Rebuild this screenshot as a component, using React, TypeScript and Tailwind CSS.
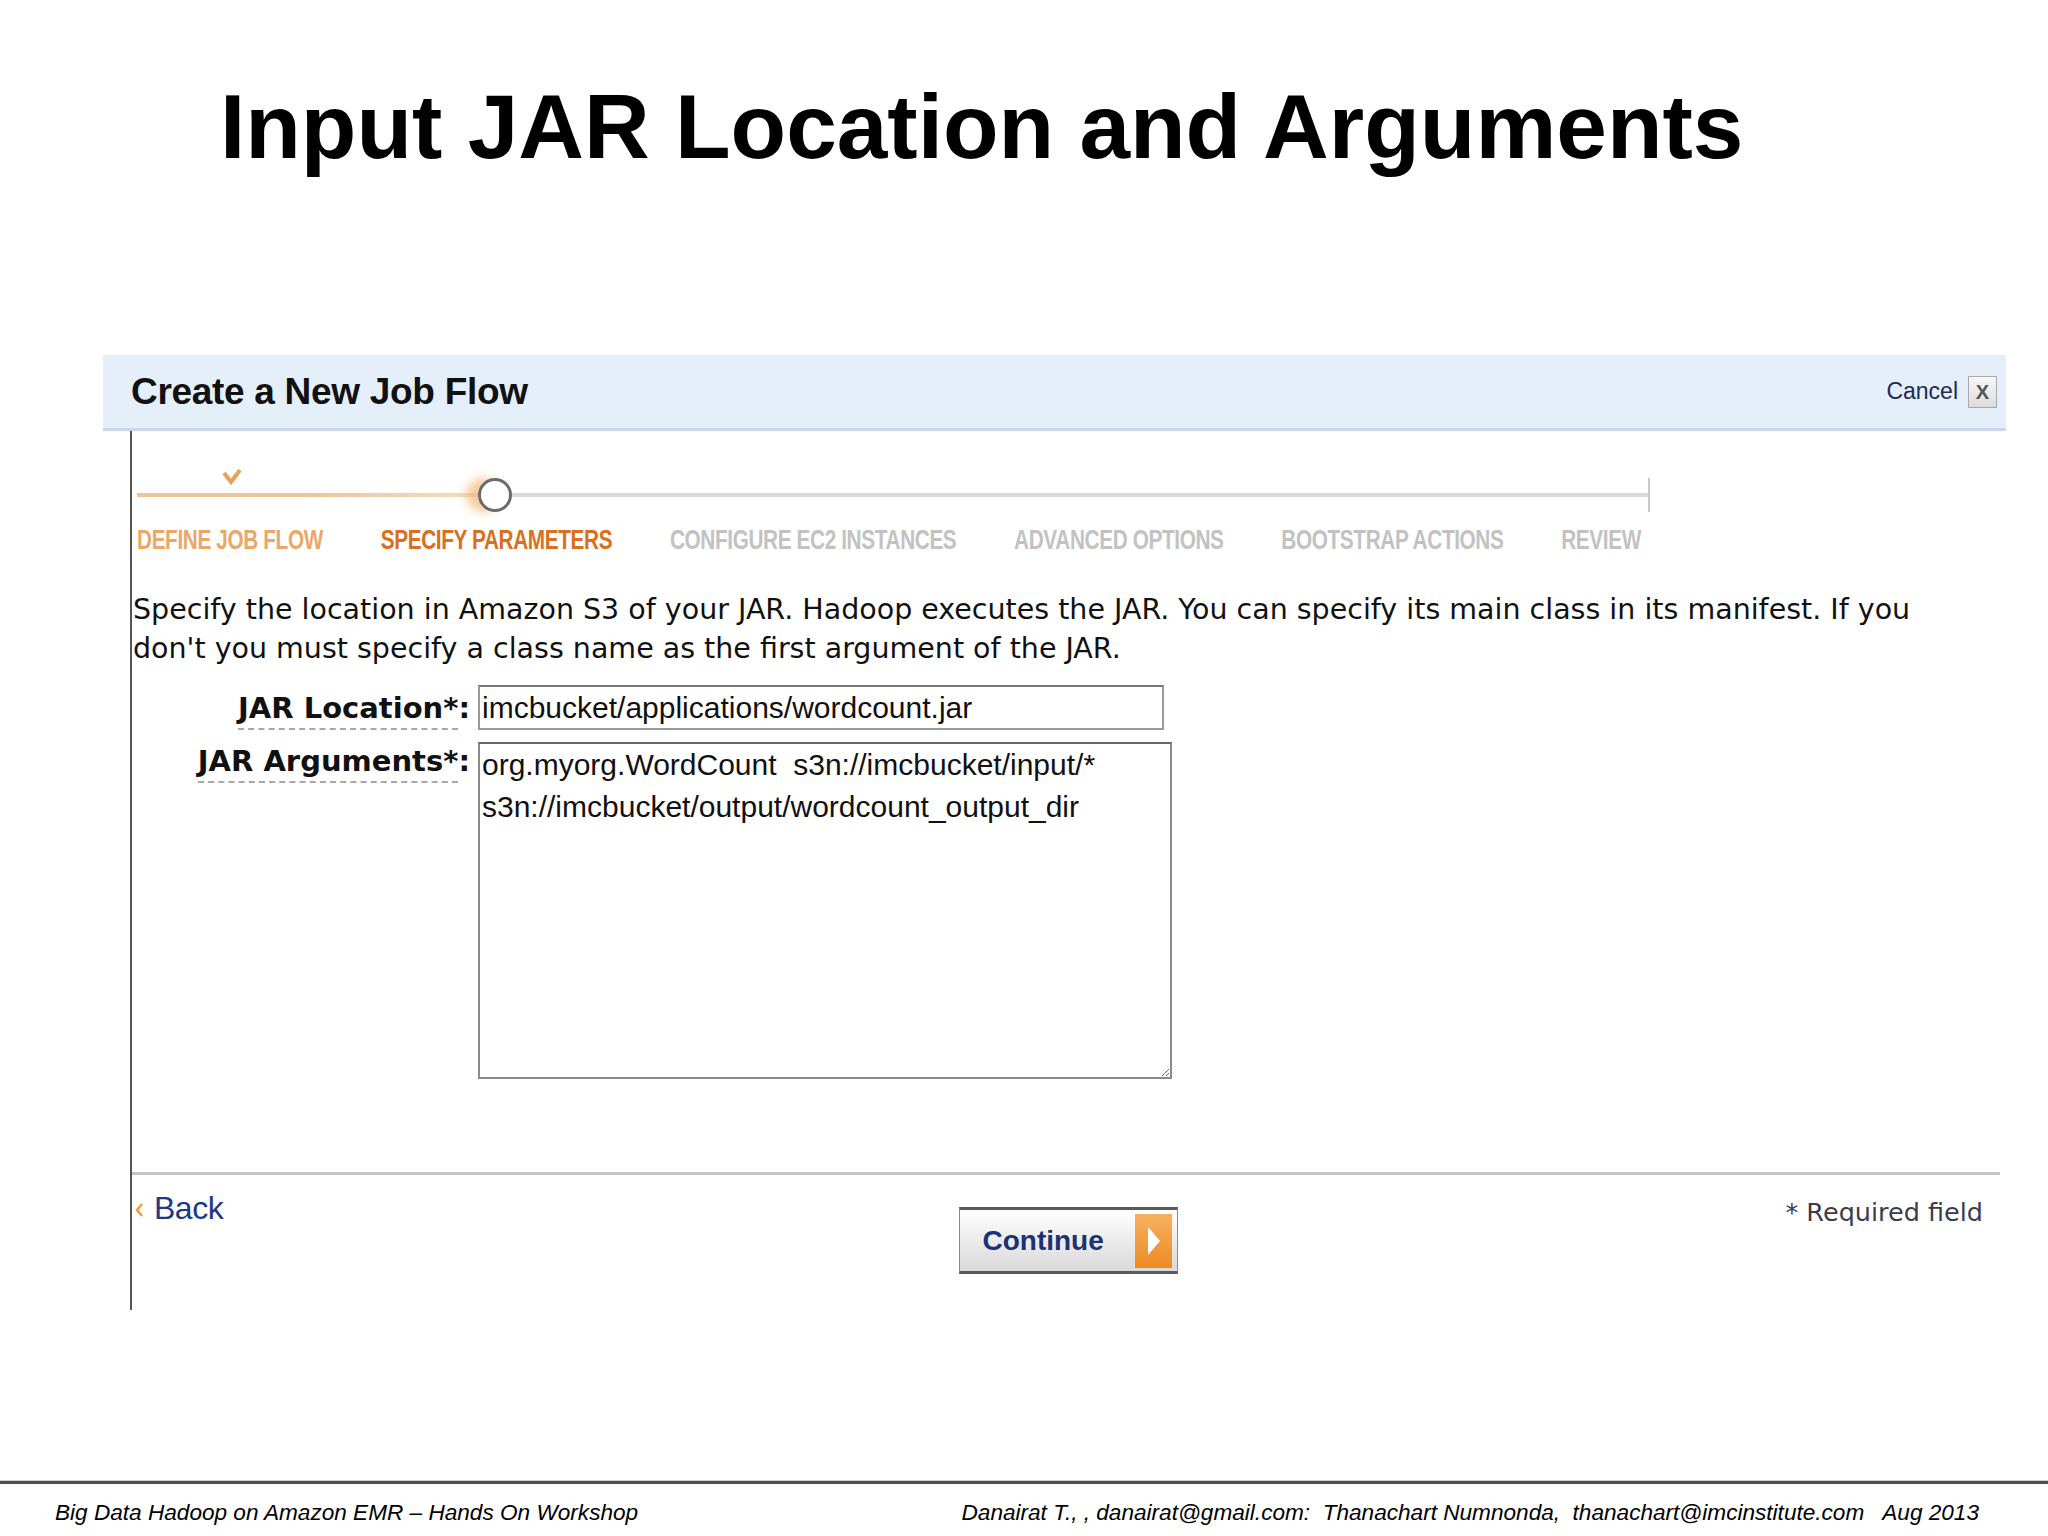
import React from "react";

const steps = [
  { label: "DEFINE JOB FLOW", color: "text-[#eaa868]" },
  { label: "SPECIFY PARAMETERS", color: "text-[#d8701c]" },
  { label: "CONFIGURE EC2 INSTANCES", color: "text-[#c2c2c2]" },
  { label: "ADVANCED OPTIONS", color: "text-[#c2c2c2]" },
  { label: "BOOTSTRAP ACTIONS", color: "text-[#c2c2c2]" },
  { label: "REVIEW", color: "text-[#c2c2c2]" },
];

function Stepper() {
  return (
    <div className="relative pl-[5px] pt-[46px]">
      {/* check mark over the finished step */}
      <svg
        className="absolute left-[90px] top-[36px]"
        width="20"
        height="18"
        viewBox="0 0 20 18"
      >
        <path d="M2 6 L9 15 L18 3" fill="none" stroke="#eba15c" strokeWidth="4" />
      </svg>
      <div className="flex items-center h-[36px]">
        <div className="w-[341px] h-[4px] bg-gradient-to-r from-[#efc39a] via-[#efc39a] to-[#f7dcc0]" />
        <div className="w-[34px] h-[34px] rounded-full border-[3px] border-[#6b6b6b] bg-white shadow-[-12px_0_10px_rgba(240,170,100,0.6)] shrink-0" />
        <div className="w-[1136px] h-[4px] bg-[#dadada]" />
        <div className="w-[2px] h-[34px] bg-[#c8c8c8]" />
      </div>
      <div className="flex gap-[75px] mt-[12px] origin-left scale-x-[0.77] whitespace-nowrap font-bold text-[27px] leading-[30px] tracking-[-0.5px] [font-family:'Liberation_Sans',Arial,sans-serif]">
        {steps.map((s) => (
          <span key={s.label} className={s.color}>
            {s.label}
          </span>
        ))}
      </div>
    </div>
  );
}

function FormRows() {
  return (
    <div className="mt-[17px] flex flex-col gap-[12px]">
      <div className="flex items-center gap-[8px]">
        <div className="w-[338px] text-right font-bold text-[29px] leading-[30px] text-[#111] [font-family:'DejaVu_Sans',sans-serif]">
          <span className="border-b-2 border-dashed border-[#a8a8a8] pb-[3px]">
            JAR Location*
          </span>
          :
        </div>
        <input
          readOnly
          defaultValue="imcbucket/applications/wordcount.jar"
          className="w-[686px] h-[45px] border-2 border-[#9a9a9a] border-t-[#777] px-[2px] text-[30px] text-[#111] outline-none [font-family:'Liberation_Sans',Arial,sans-serif]"
        />
      </div>
      <div className="flex items-start gap-[8px]">
        <div className="w-[338px] pt-[4px] text-right font-bold text-[29px] leading-[30px] text-[#111] [font-family:'DejaVu_Sans',sans-serif]">
          <span className="border-b-2 border-dashed border-[#a8a8a8] pb-[3px]">
            JAR Arguments*
          </span>
          :
        </div>
        <textarea
          readOnly
          defaultValue={"org.myorg.WordCount  s3n://imcbucket/input/*\ns3n://imcbucket/output/wordcount_output_dir"}
          className="w-[694px] h-[337px] border-2 border-[#8a8a8a] border-t-[#666] px-[2px] pt-0 text-[30px] leading-[42px] text-[#111] outline-none resize overflow-hidden [font-family:'Liberation_Sans',Arial,sans-serif]"
        />
      </div>
    </div>
  );
}

function BottomBar() {
  return (
    <div className="grid grid-cols-3 items-start">
      <div className="flex items-center gap-[10px] pl-[3px] mt-[15px]">
        <svg className="mt-[4px]" width="9" height="16" viewBox="0 0 9 16">
          <path d="M7 2 L2 8 L7 14" fill="none" stroke="#ef9a3c" strokeWidth="2.5" />
        </svg>
        <span className="text-[32px] leading-[36px] text-[#1b3a86] tracking-[-0.5px] [font-family:'Liberation_Sans',Arial,sans-serif]">
          Back
        </span>
      </div>
      <div className="flex justify-center mt-[32px]">
        <button className="w-[219px] h-[67px] flex items-center justify-between pl-[22px] pr-[5px] border-x border-[#8a8a8a] border-y-[3px] border-y-[#5a5a5a] bg-gradient-to-b from-white to-[#d9d9d9]">
          <span className="font-bold text-[28px] text-[#1b3374] [font-family:'Liberation_Sans',Arial,sans-serif]">
            Continue
          </span>
          <span className="w-[37px] h-[54px] flex items-center justify-center bg-gradient-to-b from-[#f6b25e] to-[#ee8a1e]">
            <svg width="14" height="30" viewBox="0 0 14 30">
              <path d="M1 1 L13 15 L1 29 Z" fill="#fff" />
            </svg>
          </span>
        </button>
      </div>
      <div className="flex justify-end pr-[23px] mt-[23px]">
        <span className="text-[25.5px] leading-[28px] text-[#3b3b4b] [font-family:'DejaVu_Sans',sans-serif]">
          * Required field
        </span>
      </div>
    </div>
  );
}

export default function App() {
  return (
    <div className="w-[2048px] h-[1536px] bg-white flex flex-col overflow-hidden">
      <h1 className="ml-[220px] mt-[81px] text-[91px] leading-none font-bold text-black [font-family:'Liberation_Sans',Arial,sans-serif]">
        Input JAR Location and Arguments
      </h1>

      <div className="ml-[103px] mt-[183px] w-[1903px]">
        <div className="h-[76px] flex items-center justify-between pl-[28px] pr-[9px] bg-[#e5effa] border-b-[3px] border-[#c7d7ec]">
          <span className="font-bold text-[37px] text-[#111] tracking-[-0.3px] [font-family:'Liberation_Sans',Arial,sans-serif]">
            Create a New Job Flow
          </span>
          <div className="flex items-center gap-[10px]">
            <span className="text-[23px] text-[#1a2a5a] [font-family:'Liberation_Sans',Arial,sans-serif]">
              Cancel
            </span>
            <span className="w-[29px] h-[32px] flex items-center justify-center border border-[#a9a9a9] bg-gradient-to-b from-[#f7f7f7] to-[#dcdcdc] text-[20px] font-bold text-[#555] leading-none [font-family:'Liberation_Sans',Arial,sans-serif]">
              X
            </span>
          </div>
        </div>

        <div className="ml-[27px] h-[879px] border-l-2 border-[#555]">
          <Stepper />
          <p className="mt-[35px] pl-[1px] whitespace-nowrap text-[28.5px] leading-[39px] text-[#111] [font-family:'DejaVu_Sans',sans-serif]">
            Specify the location in Amazon S3 of your JAR. Hadoop executes the JAR. You can specify its main class in its manifest. If you
            <br />
            don't you must specify a class name as the first argument of the JAR.
          </p>
          <FormRows />
          <div className="mt-[93px] w-[1868px] h-[3px] bg-[#c4c4c4]" />
          <BottomBar />
        </div>
      </div>

      <div className="mt-auto">
        <div className="h-px bg-[#cfcfcf]" />
        <div className="h-[55px] border-t-[3px] border-[#505050] flex justify-between pl-[55px] pr-[69px] pt-[15px] italic text-[22.6px] leading-[28px] text-black [font-family:'Liberation_Sans',Arial,sans-serif]">
          <span>Big Data Hadoop on Amazon EMR – Hands On Workshop</span>
          <span className="whitespace-pre">
            Danairat T., , danairat@gmail.com:  Thanachart Numnonda,  thanachart@imcinstitute.com   Aug 2013
          </span>
        </div>
      </div>
    </div>
  );
}
